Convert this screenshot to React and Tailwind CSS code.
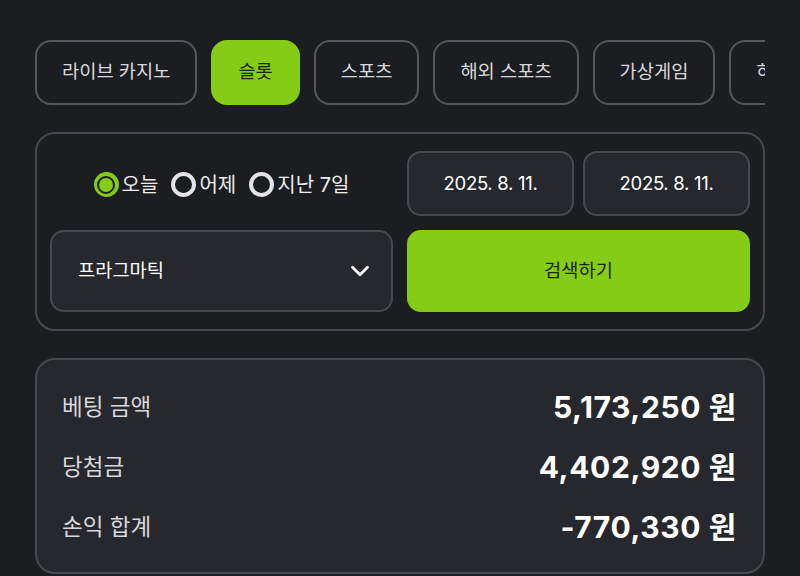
import { ChevronDown } from "lucide-react";

const tabs = ["라이브 카지노", "슬롯", "스포츠", "해외 스포츠", "가상게임", "하이로우"];

const Radio = ({ label, checked }) => (
  <label className="flex items-center gap-[3px] cursor-pointer">
    {checked ? (
      <span className="w-[25px] h-[25px] rounded-full bg-[#84cc16] flex items-center justify-center">
        <span className="w-[18px] h-[18px] rounded-full border-[2px] border-[#1c1d21] bg-[#84cc16]"></span>
      </span>
    ) : (
      <span className="w-[25px] h-[25px] rounded-full border-4 border-[#e4e4e7]"></span>
    )}
    <span className="text-[20px] text-[#ececec]">{label}</span>
  </label>
);

const SummaryRow = ({ label, value }) => (
  <div className="h-[60px] flex items-center justify-between">
    <span className="text-[22.5px] text-[#d8d8dc]">{label}</span>
    <span className="text-[30px] font-bold text-white tracking-[0.6px]">
      {value} 원
    </span>
  </div>
);

export default function App() {
  return (
    <div
      className="min-h-screen bg-[#1c1d21] px-[35px] pt-[40px] pb-4"
      style={{ fontFamily: '"Inter", "Noto Sans CJK KR", sans-serif' }}
    >
      {/* category tabs */}
      <div className="flex gap-[14px] overflow-hidden w-[730px]">
        {tabs.map((t) => (
          <button
            key={t}
            className={
              t === "슬롯"
                ? "shrink-0 h-[65px] px-[27px] rounded-[16px] bg-[#84cc16] text-[#1a2410] text-[18.7px]"
                : "shrink-0 h-[65px] px-[25px] rounded-[16px] border-2 border-[#56575c] text-[#d8d8dc] text-[18.7px]"
            }
          >
            {t}
          </button>
        ))}
      </div>

      {/* search filter */}
      <div className="mt-[27px] w-[730px] border-2 border-[#48494e] rounded-[20px] px-[13px] pt-[17px] pb-[17px]">
        <div className="grid grid-cols-2 gap-x-[14px] gap-y-[14px]">
          <div className="h-[65px] flex items-center justify-center gap-[13px] pt-[2px]">
            <Radio label="오늘" checked />
            <Radio label="어제" />
            <Radio label="지난 7일" />
          </div>
          <div className="grid grid-cols-2 gap-[9px]">
            <div className="h-[65px] rounded-[14px] border-2 border-[#48494e] bg-[#27282d] flex items-center justify-center text-[18.5px] text-white tracking-[-0.3px]">
              2025. 8. 11.
            </div>
            <div className="h-[65px] rounded-[14px] border-2 border-[#48494e] bg-[#27282d] flex items-center justify-center text-[18.5px] text-white tracking-[-0.3px]">
              2025. 8. 11.
            </div>
          </div>
          <div className="h-[82px] rounded-[14px] border-2 border-[#48494e] bg-[#27282d] flex items-center justify-between pl-[26px] pr-[16px]">
            <span className="text-[18.7px] text-white">프라그마틱</span>
            <ChevronDown size={30} className="text-white" strokeWidth={2.2} />
          </div>
          <button className="h-[82px] rounded-[14px] bg-[#84cc16] text-[18.7px] text-[#1a2410]">
            검색하기
          </button>
        </div>
      </div>

      {/* summary */}
      <div className="mt-[27px] w-[730px] border-2 border-[#48494e] bg-[#27282d] rounded-[20px] pl-[25px] pr-[26px] pt-[17px] pb-[15px]">
        <SummaryRow label="베팅 금액" value="5,173,250" />
        <SummaryRow label="당첨금" value="4,402,920" />
        <SummaryRow label="손익 합계" value="-770,330" />
      </div>
    </div>
  );
}
